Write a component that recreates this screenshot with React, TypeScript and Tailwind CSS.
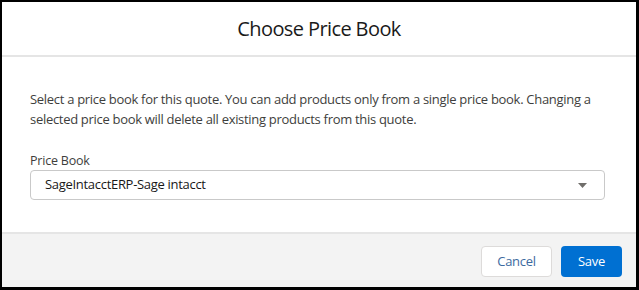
export default function App() {
  return (
    <div
      className="w-[639px] h-[290px] bg-black pt-[2px] pl-[2px] pr-[3px] pb-[3px]"
      style={{ fontFamily: '"Open Sans", "Noto Sans", sans-serif' }}
    >
      <div className="h-full bg-white flex flex-col">
        <div className="h-[55px] flex items-center justify-center border-b-2 border-[#e5e5e5]">
          <h2 className="text-[20px] leading-[28px] tracking-[-0.6px] text-[#1a1a1a] pt-[1px]">Choose Price Book</h2>
        </div>
        <div className="flex-1 pl-[28px] pr-[31px] pt-[32px]">
          <p className="text-[13px] leading-[20px] tracking-[-0.3px] text-[#3e3e3c]">
            Select a price book for this quote. You can add products only from a single price book. Changing a
            selected price book will delete all existing products from this quote.
          </p>
          <label className="block mt-[23px] text-[12.5px] leading-[18px] tracking-[-0.2px] text-[#3e3e3c]">
            Price Book
          </label>
          <div className="h-[30px] border border-[#c9c9c9] rounded-[4px] flex items-center justify-between pl-[14px] pr-[17px]">
            <span className="text-[13px] tracking-[-0.3px] text-[#181818]">SageIntacctERP-Sage intacct</span>
            <svg width="9" height="5" viewBox="0 0 9 5" className="text-[#706e6b]">
              <path d="M0 0h9L4.5 5z" fill="currentColor" />
            </svg>
          </div>
        </div>
        <div className="h-[55px] bg-[#f3f3f3] border-t-2 border-[#e5e5e5] flex items-start justify-end gap-[9px] pt-[12px] pr-[14px]">
          <button className="h-[31px] w-[71px] rounded-[4px] border border-[#dddbda] bg-white text-[13px] tracking-[-0.3px] text-[#3d6aa0]">
            Cancel
          </button>
          <button className="h-[31px] w-[61px] rounded-[4px] bg-[#0070d2] text-[13px] tracking-[-0.3px] text-white">
            Save
          </button>
        </div>
      </div>
    </div>
  );
}
